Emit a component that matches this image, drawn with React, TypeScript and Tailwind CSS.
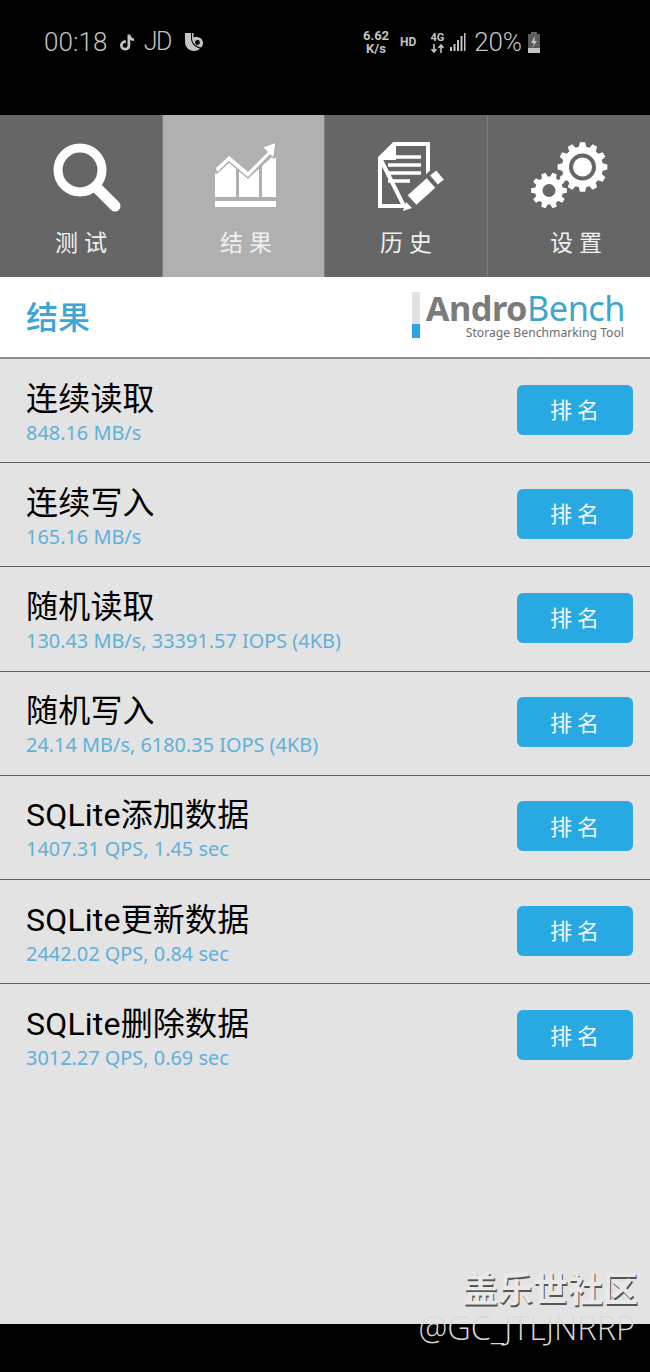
import { FaTiktok } from "react-icons/fa";

const CJK = "font-['Noto_Sans_CJK_SC','Noto_Sans',sans-serif]";

const RESULTS = [
  { name: "连续读取", value: "848.16 MB/s" },
  { name: "连续写入", value: "165.16 MB/s" },
  { name: "随机读取", value: "130.43 MB/s, 33391.57 IOPS (4KB)" },
  { name: "随机写入", value: "24.14 MB/s, 6180.35 IOPS (4KB)" },
  { name: "SQLite添加数据", value: "1407.31 QPS, 1.45 sec" },
  { name: "SQLite更新数据", value: "2442.02 QPS, 0.84 sec" },
  { name: "SQLite删除数据", value: "3012.27 QPS, 0.69 sec" },
];

function SearchIcon() {
  return (
    <svg width="70" height="72" viewBox="0 0 70 72" fill="none" stroke="#fff" className="block">
      <circle cx="27" cy="27" r="22" strokeWidth="9" />
      <path d="M44 45 L62 63" strokeWidth="11" strokeLinecap="round" />
    </svg>
  );
}

function ChartIcon() {
  return (
    <svg width="64" height="68" viewBox="0 0 64 68" fill="#fff" className="block">
      <path d="M1 33 L15 21 L22 27 L22 56 L1 56Z" />
      <path d="M25 30 L34 37 L45 28 L45 56 L25 56Z" />
      <path d="M48 25 L59 15 L62 17 L62 56 L48 56Z" />
      <path d="M1 27 L15 14 L34 30 L53 11 L48 6 L62 1 L60 17 L56 14 L34 37 L15 21 L3 32Z" stroke="#b0b0b0" strokeWidth="1.5" />
      <rect x="1" y="60" width="61" height="6" />
    </svg>
  );
}

function DocIcon() {
  return (
    <svg width="68" height="72" viewBox="0 0 68 72" fill="none" className="block">
      <path d="M16 2 H50 V40 M26 64 H2 V16Z" stroke="#fff" strokeWidth="4" />
      <path d="M2 16 L16 2 V16Z" fill="#fff" stroke="#fff" strokeWidth="4" />
      <g stroke="#fff" strokeWidth="3.5">
        <path d="M10 15 H43" />
        <path d="M10 23 H43" />
        <path d="M10 31 H43" />
        <path d="M10 39 H32" />
      </g>
      <path d="M31 62 L64 31" stroke="#666" strokeWidth="20" />
      <path d="M34 58 L53 41" stroke="#fff" strokeWidth="13" />
      <path d="M56 38 L62 33" stroke="#fff" strokeWidth="12" />
      <path d="M25 69 L28 60 L34 66Z" fill="#fff" />
    </svg>
  );
}

// Builds a toothed outline around (cx, cy)
function gearPath(cx: number, cy: number, outer: number, inner: number, teeth: number) {
  const step = (Math.PI * 2) / teeth;
  const points: string[] = [];
  for (let i = 0; i < teeth; i++) {
    const a = i * step;
    const corners = [
      [inner, a - step * 0.34],
      [outer, a - step * 0.2],
      [outer, a + step * 0.2],
      [inner, a + step * 0.34],
    ];
    for (const [r, t] of corners) {
      points.push(`${(cx + r * Math.cos(t)).toFixed(2)} ${(cy + r * Math.sin(t)).toFixed(2)}`);
    }
  }
  return `M${points.join(" L")}Z`;
}

function GearsIcon() {
  return (
    <svg width="78" height="68" viewBox="0 0 78 68" className="block">
      <path d={gearPath(51.5, 25, 25, 20.5, 12)} fill="#fff" />
      <circle cx="51.5" cy="25" r="11.5" fill="none" stroke="#666" strokeWidth="4" />
      <path d={gearPath(18, 48.5, 18, 14, 10)} fill="#fff" />
      <circle cx="18" cy="48.5" r="6.5" fill="#666" />
    </svg>
  );
}

function BixbyIcon() {
  return (
    <svg width="18" height="18" viewBox="0 0 18 18" className="block">
      <path d="M0 0 H6 V5 C6 10 9 14 15 15.5 C13.5 17.2 11.5 18 9 18 C4 18 0 14 0 9Z" fill="#c4c4c4" />
      <path d="M7 0 H8.5 V4.5 C12.5 3 18 5 18 10 C18 12 17 13.5 16 14.5 C11 13.5 7 10 7 5Z" fill="#c4c4c4" />
      <circle cx="12.5" cy="9.5" r="2.4" fill="#000" />
    </svg>
  );
}

function NetworkArrows() {
  return (
    <svg width="13" height="9" viewBox="0 0 13 9" fill="none" stroke="#c4c4c4" strokeWidth="1.6" className="block">
      <path d="M3 0 V8 M0.5 5 L3 8 L5.5 5" />
      <path d="M10 9 V1 M7.5 4 L10 1 L12.5 4" />
    </svg>
  );
}

function SignalBars() {
  return (
    <svg width="16" height="20" viewBox="0 0 16 20" fill="#c4c4c4" className="block">
      <rect x="0" y="15" width="2" height="4" />
      <rect x="3.5" y="12" width="2" height="7" />
      <rect x="7" y="8" width="2" height="11" />
      <rect x="10.5" y="4" width="2" height="15" />
      <rect x="14" y="1" width="1.5" height="18" />
    </svg>
  );
}

function BatteryIcon() {
  return (
    <svg width="12" height="21" viewBox="0 0 12 21" className="block">
      <rect x="3" y="0" width="6" height="2" fill="#666" />
      <rect x="0" y="2" width="12" height="19" fill="#5a5a5a" />
      <rect x="0" y="16" width="12" height="5" fill="#c4c4c4" />
      <path d="M7 4 L3 11 H6 L4 16 L9 9 H6.5Z" fill="#c4c4c4" />
    </svg>
  );
}

function StatusBar() {
  return (
    <div className="h-[115px] bg-black flex items-start pt-[28px] text-[#c4c4c4] font-['Roboto',sans-serif]">
      <div className="ml-[44px] w-[159px] flex items-center h-[28px]">
        <span className="text-[26px] font-light tracking-[0.1px]">00:18</span>
        <FaTiktok className="ml-[12px] text-[19px]" />
        <span className="ml-[10px] text-[25px] font-light tracking-[-1.5px]">JD</span>
        <span className="ml-[14px] flex"><BixbyIcon /></span>
      </div>
      <div className="ml-[159px] flex items-center h-[28px]">
        <div className="flex flex-col items-center text-[13px] font-bold leading-[13px] w-[28px]">
          <span className="block">6.62</span>
          <span className="block">K/s</span>
        </div>
        <span className="ml-[10px] text-[12px] font-bold">HD</span>
        <div className="ml-[14px] flex flex-col items-center gap-[1px] w-[14px]">
          <span className="block text-[11px] font-bold leading-[11px]">4G</span>
          <NetworkArrows />
        </div>
        <span className="ml-[6px] flex"><SignalBars /></span>
        <span className="ml-[8px] text-[26px] font-light tracking-[-0.2px]">20%</span>
        <span className="ml-[6px] flex"><BatteryIcon /></span>
      </div>
    </div>
  );
}

function TabBar() {
  const tabs = [
    { label: "测试", icon: <SearchIcon />, bg: "bg-[#666666]", w: "w-[162px]", iconBox: "pl-[53px] pt-[28px]", labelBox: "pl-[55px]" },
    { label: "结果", icon: <ChartIcon />, bg: "bg-[#b0b0b0]", w: "w-[161px]", iconBox: "pl-[51px] pt-[26px]", labelBox: "pl-[57px]" },
    { label: "历史", icon: <DocIcon />, bg: "bg-[#666666]", w: "w-[162px]", iconBox: "pl-[53px] pt-[27px]", labelBox: "pl-[55px]" },
    { label: "设置", icon: <GearsIcon />, bg: "bg-[#666666]", w: "flex-1", iconBox: "pl-[43px] pt-[27px]", labelBox: "pl-[62px]" },
  ];
  return (
    <div className="h-[162px] flex gap-px bg-[#7c7c7c]">
      {tabs.map((tab) => (
        <div key={tab.label} className={`${tab.w} ${tab.bg} flex flex-col`}>
          <div className={`h-[112px] ${tab.iconBox}`}>{tab.icon}</div>
          <div className={tab.labelBox}>
            <span className={`${CJK} block text-[23px] leading-[28px] tracking-[6px] text-[#f0f0f0]`}>
              {tab.label}
            </span>
          </div>
        </div>
      ))}
    </div>
  );
}

function Header() {
  return (
    <div className="h-[82px] bg-white border-b-2 border-[#8f8f8f] flex items-center justify-between pl-[26px] pr-[25px]">
      <span className={`${CJK} block text-[32px] leading-[40px] -mt-[5px] font-medium text-[#3fa5d6]`}>结果</span>
      <div className="flex items-stretch gap-[6px] -mt-[3px]">
        <div className="w-[8px] flex flex-col">
          <div className="h-[32px] bg-[#e2e2e2]" />
          <div className="h-[14px] bg-[#2ba6df]" />
        </div>
        <div className="flex flex-col items-end font-['Noto_Sans',sans-serif]">
          <div className="h-[32px] flex text-[34.3px] leading-[32px] tracking-[-0.5px]">
            <span className="block font-bold text-[#7b7b7b]">Andro</span>
            <span className="block text-[#3fa5cf]">Bench</span>
          </div>
          <span className="block mt-[2px] mr-[1px] text-[12.2px] leading-[13px] text-[#6e6e6e]">Storage Benchmarking Tool</span>
        </div>
      </div>
    </div>
  );
}

function ResultRow({ name, value }: { name: string; value: string }) {
  return (
    <div className="h-[104.2px] border-b border-[#5e5e5e] pb-[2px] flex items-center justify-between pl-[26px] pr-[17px]">
      <div className="flex flex-col mt-[7px]">
        <span className="block font-['Roboto','Noto_Sans_CJK_SC',sans-serif] text-[32px] leading-[39px] tracking-[0.2px] text-black">{name}</span>
        <span className="block text-[19.9px] leading-[28px] text-[#5fb0da] font-['Noto_Sans',sans-serif]">{value}</span>
      </div>
      <button className={`${CJK} w-[116px] h-[50px] rounded-[6px] bg-[#29a9e1] pb-[2px] pl-[4px] text-[22px] tracking-[5px] text-[#f2f8fc]`}>
        排名
      </button>
    </div>
  );
}

export default function App() {
  return (
    <div className="relative h-[1372px] w-[650px] flex flex-col bg-black overflow-hidden">
      <StatusBar />
      <TabBar />
      <Header />
      <main className="h-[965px] bg-[#e3e3e3]">
        {RESULTS.map((row, i) => (
          <div key={row.name} className={i === RESULTS.length - 1 ? "[&>div]:border-b-0" : ""}>
            <ResultRow name={row.name} value={row.value} />
          </div>
        ))}
      </main>
      {/* community watermark over the lower right corner */}
      <div className="absolute right-[12px] top-[1264px] flex flex-col items-end">
        <span className={`${CJK} block text-[35px] leading-[46px] font-bold text-[#e9e9e9] [text-shadow:1px_2px_0_#555]`}>
          盖乐世社区
        </span>
        <span className="block text-[32.5px] leading-[38px] -mt-[1px] mr-[3px] text-[#d8d8d8] font-['Open_Sans',sans-serif] font-light">
          @GC_JTLJNRRP
        </span>
      </div>
    </div>
  );
}
